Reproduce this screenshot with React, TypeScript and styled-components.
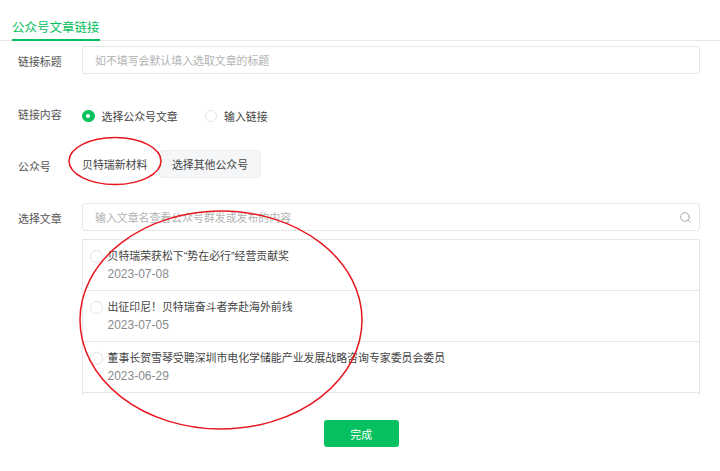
import styled, { createGlobalStyle } from "styled-components";
import { Search } from "lucide-react";

const GlobalStyle = createGlobalStyle`
  html, body {
    margin: 0;
    padding: 0;
    background: #fff;
  }
  * {
    box-sizing: border-box;
  }
`;

const articles = [
  { title: "贝特瑞荣获松下“势在必行”经营贡献奖", date: "2023-07-08" },
  { title: "出征印尼！贝特瑞奋斗者奔赴海外前线", date: "2023-07-05" },
  { title: "董事长贺雪琴受聘深圳市电化学储能产业发展战略咨询专家委员会委员", date: "2023-06-29" },
];

const Page = styled.div`
  position: relative;
  width: 720px;
  height: 471px;
  overflow: hidden;
  background: #fff;
  color: #353535;
  font-family: "Liberation Sans", "Noto Sans CJK SC", sans-serif;
  font-size: 10.9px;
`;

const TabBar = styled.div`
  display: flex;
  height: 41px;
  padding-left: 12px;
  border-bottom: 1px solid #e7e7e7;
`;

const Tab = styled.div`
  height: 41px;
  width: 88px;
  padding-top: 19px;
  border-bottom: 2px solid #07c160;
  color: #07c160;
  font-size: 12.5px;
  line-height: 18px;
  white-space: nowrap;
`;

const Form = styled.div`
  padding: 5px 20.5px 0 18px;
`;

const Row = styled.div<{ $top?: number }>`
  display: flex;
  align-items: flex-start;
  margin-top: ${(p) => p.$top ?? 0}px;
`;

const Label = styled.div<{ $offset?: number }>`
  flex: 0 0 64px;
  padding-top: ${(p) => p.$offset ?? 0}px;
  color: #555;
  line-height: 16px;
`;

const Field = styled.div`
  position: relative;
  display: flex;
  align-items: center;
  flex: 1;
  height: 28px;
  padding: 0 12px;
  border: 1px solid #e7e7e7;
  border-radius: 3px;
  color: #b2b2b2;
  white-space: nowrap;
`;

const SearchIcon = styled(Search)`
  position: absolute;
  right: 7px;
  top: 7px;
  color: #a0a0a0;
`;

const RadioGroup = styled.div`
  display: flex;
  align-items: center;
  height: 20px;
`;

const Radio = styled.span<{ $checked?: boolean }>`
  display: inline-flex;
  align-items: center;
  justify-content: center;
  flex: none;
  width: 12.5px;
  height: 12.5px;
  border-radius: 50%;
  border: 1px solid ${(p) => (p.$checked ? "#07c160" : "#e4e4e4")};
  background: ${(p) => (p.$checked ? "#07c160" : "#fff")};

  &::after {
    content: "";
    display: ${(p) => (p.$checked ? "block" : "none")};
    width: 4px;
    height: 4px;
    border-radius: 50%;
    background: #fff;
  }
`;

const RadioText = styled.span<{ $width: number }>`
  width: ${(p) => p.$width}px;
  margin-left: 7px;
  color: #444;
  white-space: nowrap;
`;

const Account = styled.div`
  display: flex;
  align-items: center;
  width: 77px;
  height: 28px;
  white-space: nowrap;
  color: #444;
`;

const OtherButton = styled.div`
  display: flex;
  align-items: center;
  justify-content: center;
  width: 102px;
  height: 28px;
  border: 1px solid #eeeff1;
  border-radius: 3px;
  background: #f5f6f8;
  color: #444;
  white-space: nowrap;
`;

const List = styled.div`
  height: 156px;
  margin: 8px 0 0 64px;
  overflow: hidden;
  border: 1px solid #e7e7e7;
  border-bottom: none;
`;

const Item = styled.div`
  display: flex;
  align-items: flex-start;
  height: 51px;
  padding: 9px 0 0 7px;
  border-bottom: 1px solid #e7e7e7;
`;

const ItemRadio = styled(Radio)`
  margin-top: 1px;
`;

const ItemBody = styled.div`
  margin-left: 5px;
  white-space: nowrap;
`;

const ItemTitle = styled.div`
  color: #444;
  line-height: 15px;
`;

const ItemDate = styled.div`
  margin-top: 3px;
  color: #8a8a8a;
  font-size: 12px;
  line-height: 15px;
`;

const Footer = styled.div`
  display: flex;
  justify-content: center;
  margin-top: 25px;
  padding-left: 5px;
`;

const DoneButton = styled.div`
  display: flex;
  align-items: center;
  justify-content: center;
  width: 75px;
  height: 27px;
  border-radius: 3px;
  background: #07c160;
  color: #fff;
`;

const Annotations = styled.svg`
  position: absolute;
  inset: 0;
  pointer-events: none;
`;

export default function App() {
  return (
    <>
      <GlobalStyle />
      <Page>
        <TabBar>
          <Tab>公众号文章链接</Tab>
        </TabBar>
        <Form>
          <Row>
            <Label $offset={8}>链接标题</Label>
            <Field>如不填写会默认填入选取文章的标题</Field>
          </Row>
          <Row $top={32}>
            <Label $offset={1}>链接内容</Label>
            <RadioGroup>
              <Radio $checked />
              <RadioText $width={103}>选择公众号文章</RadioText>
              <Radio />
              <RadioText $width={44}>输入链接</RadioText>
            </RadioGroup>
          </Row>
          <Row $top={24}>
            <Label $offset={9}>公众号</Label>
            <Account>贝特瑞新材料</Account>
            <OtherButton>选择其他公众号</OtherButton>
          </Row>
          <Row $top={25}>
            <Label $offset={8}>选择文章</Label>
            <Field>
              输入文章名查看公众号群发或发布的内容
              <SearchIcon size={13} strokeWidth={1.7} />
            </Field>
          </Row>
          <List>
            {articles.map((article) => (
              <Item key={article.date}>
                <ItemRadio />
                <ItemBody>
                  <ItemTitle>{article.title}</ItemTitle>
                  <ItemDate>{article.date}</ItemDate>
                </ItemBody>
              </Item>
            ))}
          </List>
          <Footer>
            <DoneButton>完成</DoneButton>
          </Footer>
        </Form>
        {/* hand-drawn red circles on top of the screenshot */}
        <Annotations width="720" height="471" viewBox="0 0 720 471" fill="none">
          <ellipse cx="115" cy="161" rx="46" ry="23.5" stroke="#e8161f" strokeWidth="1.5" />
          <ellipse cx="221" cy="320" rx="141" ry="109" stroke="#e8161f" strokeWidth="1.5" />
        </Annotations>
      </Page>
    </>
  );
}
